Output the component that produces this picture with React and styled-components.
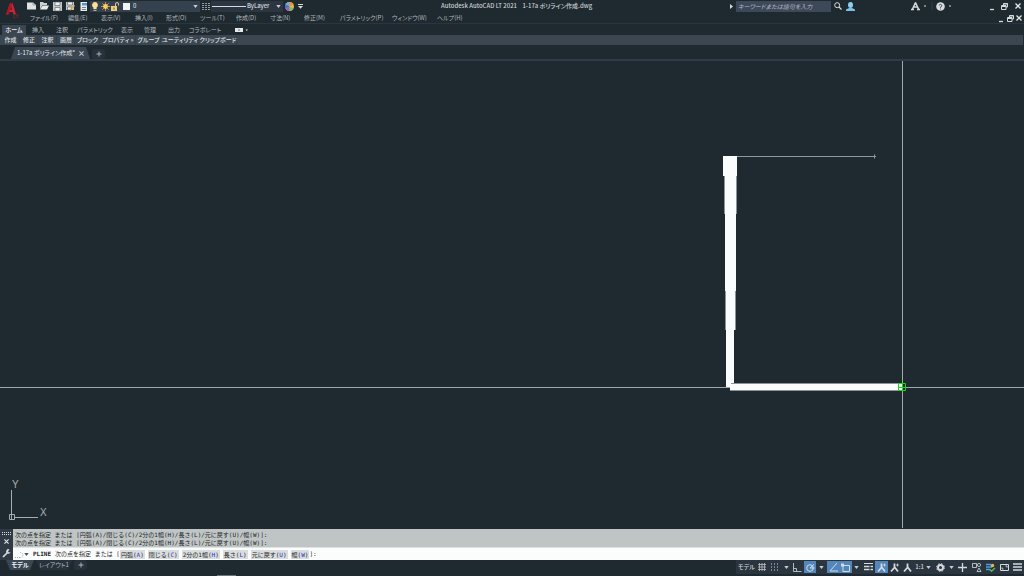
import React from "react";
import styled, { createGlobalStyle, css } from "styled-components";

const Global = createGlobalStyle`
  * { box-sizing: border-box; }
  html, body, #root { height: 100%; }
  body {
    margin: 0;
    overflow: hidden;
    background: #1f2a30;
    color: #b4bbc0;
    font: 6px/10px "Noto Sans CJK JP", "Noto Sans", sans-serif;
    font-feature-settings: "palt";
  }
  button, input, select { font: inherit; font-feature-settings: inherit; color: inherit; }
`;

const plain = css`
  border: 0;
  padding: 0;
  margin: 0;
  background: none;
  white-space: nowrap;
`;

const Shell = styled.div`
  display: flex;
  flex-direction: column;
  height: 100vh;
`;

const Icon = styled.svg`
  display: block;
  flex: none;
  overflow: visible;
`;

const TitleBar = styled.header`
  display: grid;
  grid-template-columns: 25px 1fr;
  height: 24px;
  border-bottom: 1px solid #2a3540;
`;

const Logo = styled.button`
  ${plain}
  display: flex;
  padding: 3px 0 0 6px;
`;

const TitleRows = styled.div`
  display: flex;
  flex-direction: column;
  min-width: 0;
`;

const TopRow = styled.div`
  display: flex;
  align-items: center;
  height: 12px;
`;

const QuickAccess = styled.div`
  display: flex;
  align-items: center;
  flex: none;
  width: 281px;
`;

const IconButton = styled.button`
  ${plain}
  display: flex;
  align-items: center;
  justify-content: center;
  flex: none;
  width: ${(p) => p.$w || 13}px;
  height: ${(p) => p.$h || 12}px;
  background: ${(p) => (p.$on ? "#5187bd" : "none")};
`;

const PickerBox = styled.div`
  display: flex;
  align-items: center;
  flex: none;
  gap: ${(p) => p.$gap || 0}px;
  width: ${(p) => p.$w}px;
  height: 11px;
  padding-right: 2px;
  background: ${(p) => p.$bg};
`;

const Picker = styled.select`
  ${plain}
  appearance: none;
  flex: 1;
  min-width: 0;
  height: 10px;
  color: #eceff1;
  line-height: 10px;
`;

const DocTitle = styled.h1`
  flex: 1;
  margin: 0;
  padding-left: 135px;
  font-size: 6px;
  line-height: 12px;
  font-weight: 500;
  color: #cbd0d3;
  white-space: pre;
`;

const Tools = styled.div`
  display: flex;
  align-items: center;
  flex: none;
`;

const Search = styled.input`
  ${plain}
  width: 95px;
  height: 11px;
  padding-left: 2px;
  background: #3d4858;
  &::placeholder { color: #b4bbc5; font-style: italic; opacity: 1; }
`;

const Gap = styled.span`
  flex: none;
  width: ${(p) => p.$w}px;
`;

const MenuRow = styled.nav`
  display: flex;
  align-items: center;
  height: 12px;
  padding-left: 5px;
`;

const MenuItem = styled.button`
  ${plain}
  flex: none;
  width: ${(p) => p.$w}px;
  line-height: 12px;
  text-align: left;
  color: #b0b7bb;
`;

const ChildControls = styled.div`
  display: flex;
  margin-left: auto;
  padding-right: 1px;
`;

const RibbonTabs = styled.nav`
  display: flex;
  align-items: flex-end;
  height: 11px;
  padding-left: 2px;
`;

const RibbonTab = styled.button`
  ${plain}
  flex: none;
  width: ${(p) => p.$w}px;
  height: 10px;
  line-height: 10px;
  color: ${(p) => (p.$on ? "#eef1f3" : "#b0b7bb")};
  font-weight: ${(p) => (p.$on ? 500 : 400)};
  background: ${(p) => (p.$on ? "#3b4653" : "none")};
`;

const PanelBar = styled.div`
  display: flex;
  height: 10px;
  margin-right: 1px;
  padding-left: 1px;
  background: #3b4650;
`;

const Panel = styled.button`
  ${plain}
  flex: none;
  width: ${(p) => p.$w}px;
  line-height: 10px;
  font-weight: 500;
  color: #dbe0e3;
  box-shadow: inset -1px 0 #343f4a;
`;

const FileTabs = styled.div`
  display: flex;
  align-items: flex-end;
  height: 16px;
  padding-left: 11px;
  gap: 2px;
  border-bottom: 2px solid #303b48;
`;

const FileTab = styled.div`
  display: flex;
  align-items: center;
  justify-content: space-between;
  width: 79px;
  height: 12px;
  padding: 0 6px;
  background: #3b4653;
  color: #e2e6e9;
  clip-path: polygon(4px 0, 75px 0, 100% 100%, 0 100%);
  white-space: nowrap;
`;

const AddTab = styled.button`
  ${plain}
  display: flex;
  align-items: center;
  justify-content: center;
  width: 13px;
  height: 10px;
  background: #28323c;
  border-radius: 3px;
`;

const Canvas = styled.main`
  flex: 1;
  min-height: 0;
  background: #1f2a30;
  svg { display: block; width: 100%; height: 100%; }
  text { font: 10px "Liberation Sans", sans-serif; fill: #aab0b3; }
`;

const Command = styled.section`
  display: grid;
  grid-template-columns: 13px 1fr;
  height: 31px;
  margin-top: 1px;
  color: #1d2325;
`;

const CommandSide = styled.div`
  display: flex;
  flex-direction: column;
  align-items: center;
  justify-content: space-between;
  padding: 3px 0 1px;
  background: #303a45;
`;

const CommandBody = styled.div`
  display: flex;
  flex-direction: column;
  min-width: 0;
  font-family: "DejaVu Sans Mono", "Noto Sans CJK JP", monospace;
  font-feature-settings: normal;
`;

const History = styled.div`
  height: 18px;
  padding: 2px 2px 0;
  background: #bfc5c4;
  line-height: 8px;
  white-space: pre;
`;

const Prompt = styled.label`
  display: flex;
  align-items: center;
  flex: 1;
  padding-left: 2px;
  border-top: 1px solid #dfe3e3;
  background: #fbfdfd;
  white-space: pre;
`;

const Keyword = styled.button`
  ${plain}
  height: 9px;
  line-height: 9px;
  padding: 0 1px;
  margin-right: 3px;
  background: #d9dddd;
  &:last-of-type { margin-right: 0; }
  b { color: #1f2ae0; font-weight: 400; }
`;

const PromptName = styled.b`
  padding: 0 4px;
`;

const PromptInput = styled.input`
  ${plain}
  flex: 1;
  min-width: 0;
  outline: 0;
`;

const StatusRow = styled.footer`
  display: flex;
  height: 16px;
`;

const LayoutTabs = styled.nav`
  display: flex;
  flex: none;
  width: 217px;
  gap: 2px;
  padding-left: 6px;
`;

const LayoutTab = styled.button`
  ${plain}
  width: ${(p) => p.$w}px;
  height: 10px;
  line-height: 10px;
  color: ${(p) => (p.$on ? "#f4f6f7" : "#b0b7bb")};
  background: ${(p) => (p.$on ? "#3b4653" : "#28323c")};
  font-weight: ${(p) => (p.$on ? 700 : 400)};
  clip-path: polygon(0 0, 100% 0, calc(100% - 4px) 100%, 4px 100%);
`;

const Grip = styled.div`
  align-self: flex-end;
  width: 19px;
  height: 1px;
  background: #6d767b;
`;

const StatusTools = styled.div`
  display: flex;
  align-items: center;
  height: 14px;
  margin-left: auto;
  background: #2b3540;
  color: #d5dadd;
`;

const StatusText = styled.button`
  ${plain}
  width: ${(p) => p.$w}px;
  text-align: right;
  font-weight: 500;
`;

const Caret = ({ c = "#c5cbd0" }) => (
  <Icon width="5" height="3" viewBox="0 0 5 3"><path d="M.3 0h4.400L2.500 3z" fill={c} /></Icon>
);

const G = ({ w = 10, h = 10, children }) => (
  <Icon width={w} height={h} viewBox={`0 0 ${w} ${h}`} fill="none" stroke="#d5dadd" strokeWidth="1">
    {children}
  </Icon>
);

const Plus = ({ c = "#a9b0b5" }) => <G w={6} h={6}><path d="M3 .5v5M.5 3h5" stroke={c} /></G>;
const Cross = ({ s = 6, c = "#e3e7e9" }) => (
  <Icon width={s} height={s} viewBox="0 0 6 6"><path d="M.5.5l5 5M5.500.5l-5 5" stroke={c} strokeWidth="1.300" /></Icon>
);
const Restore = () => <G w={7} h={7}><path d="M2.500 2V.500h4v3.500H5M.5 2.500h4.500v4H.5zM.5 3.500H5M2.500 1h4" /></G>;
const Minimise = () => <G w={6} h={7}><path d="M1 6.500h4" strokeWidth="1.300" /></G>;

const quick = [
  ["新規", <G w={9} h={8}><path d="M0 .5h6l3 2.500V7.500H0z" fill="#dfe3e3" stroke="none" /><path d="M6 .5v2.500h3" stroke="#7c868e" strokeWidth=".7" /></G>],
  ["開く", <G w={9} h={8}><path d="M0 0h3l1 1h3v2H2.500L0 7z" fill="#cbd0d1" stroke="none" /><path d="M2.500 3.500H9L7 7.500H0z" fill="#e8ebeb" stroke="none" /></G>],
  ["上書き保存", <G w={9} h={9}><path d="M0 0h9v9H0z" fill="#c2c8cb" stroke="none" /><path d="M2 0h5v3.500H2zM2 5.500h5V9H2z" fill="#eef0f0" stroke="#4d5961" strokeWidth=".6" /></G>],
  ["名前を付けて保存", <G w={9} h={9}><path d="M0 0h8v8H0z" fill="#c2c8cb" stroke="none" /><path d="M1.500 0h5v3h-5zM1.500 5h4v3h-4z" fill="#eef0f0" stroke="#4d5961" strokeWidth=".6" /><path d="M4 8l4.500-4.500" stroke="#e4a94a" strokeWidth="1.600" /></G>],
  ["印刷", <G w={8} h={9}><path d="M.5 0h6.500v9H.5z" fill="#e8ebec" stroke="none" /><path d="M2 1h5v2.500H2z" fill="#4f9ad0" stroke="none" /><path d="M2 5.500h4M2 7.500h4" stroke="#77828a" /></G>],
];

const layerTools = [
  ["表示", <G w={8} h={9}><path d="M4 0a3 3 0 0 1 1.600 5.500V7h-3.200V5.500A3 3 0 0 1 4 0z" fill="#fbdf94" stroke="none" /><path d="M2.500 8.300h3" stroke="#c5cacd" /></G>],
  ["フリーズ", <G w={9} h={9}><path d="M4.500 0v9M0 4.500h9M1.300 1.300l6.400 6.400M7.700 1.300L1.300 7.700" stroke="#e7a93c" strokeWidth=".8" /><circle cx="4.500" cy="4.500" r="2.400" fill="#f6cf68" stroke="none" /></G>],
  ["ロック", <G w={8} h={9}><path d="M4.500 4V2a1.500 1.500 0 0 1 3 0v1.500" stroke="#e8c77d" /><path d="M0 4h6v5H0z" fill="#efcf7f" stroke="none" /><path d="M3 5.500v2" stroke="#6b5a2c" /></G>],
];

const menus = [
  ["ファイル(F)", 38], ["編集(E)", 33], ["表示(V)", 34], ["挿入(I)", 31], ["形式(O)", 34], ["ツール(T)", 36],
  ["作成(D)", 34], ["寸法(N)", 34], ["修正(M)", 36], ["パラメトリック(P)", 52], ["ウィンドウ(W)", 45], ["ヘルプ(H)", 40],
];
const ribbon = [
  ["ホーム", 24], ["挿入", 24], ["注釈", 24], ["パラメトリック", 42], ["表示", 22], ["管理", 24], ["出力", 24], ["コラボレート", 38],
];
const panels = [
  ["作成", 19], ["修正", 18], ["注釈", 19], ["画層", 18], ["ブロック", 25], ["プロパティ »", 36], ["グループ", 25], ["ユーティリティ", 38], ["クリップボード", 38],
];
const keywords = [["円弧", "A"], ["閉じる", "C"], ["2分の1幅", "H"], ["長さ", "L"], ["元に戻す", "U"], ["幅", "W"]];
const historyLine = "次の点を指定 または [円弧(A)/閉じる(C)/2分の1幅(H)/長さ(L)/元に戻す(U)/幅(W)]:";

const Person = ({ star }) => (
  <G w={9} h={9}>
    <path d="M4.500.5v4L1 8.500M4.500 4L8 8.500" strokeWidth="1.800" />
    {star && <path d="M6 2h3M7.500.5v3" strokeWidth=".8" />}
  </G>
);

const status = [
  ["グリッド", 13, <G w={8} h={8}><path d="M1.500 0v8M4 0v8M6.500 0v8M0 1.500h8M0 4h8M0 6.500h8" stroke="#b9c0c5" strokeWidth=".8" /></G>],
  ["スナップ", 13, <G w={7} h={8}><path d="M0 1h7M0 4h7M0 7h7" strokeDasharray="1 2" /></G>],
  ["スナップ設定", 10, <Caret />],
  ["直交モード", 13, <G w={9} h={9}><path d="M.5 0v8.500h8M1 5.500h2.500v3" stroke="#b3babf" /></G>],
  ["極トラッキング", 12, <G w={9} h={9}><circle cx="4" cy="5" r="3.300" /><path d="M4 5h4.500M4 5L8 1.500" /></G>, true],
  ["極トラッキング設定", 11, <Caret />],
  ["オブジェクトスナップトラッキング", 12, <G w={9} h={9}><path d="M8 0L1 8h8" /></G>, true],
  ["オブジェクトスナップ", 13, <G w={9} h={9}><path d="M2 2.500h6.500v6H2z" /><path d="M0 .5h3v3H0z" fill="#d5dadd" stroke="none" /></G>, true],
  ["オブジェクトスナップ設定", 9, <Caret />],
  ["線の太さ", 14, <G w={9} h={8}><path d="M0 .5h9" /><path d="M0 3.500h5.500M6.500 3.500h2.500M0 6.500h5.500M6.500 6.500h2.500" strokeWidth="1.700" /></G>],
  ["注釈オブジェクト", 13, <Person star />, true],
  ["自動尺度", 13, <Person star />],
  ["注釈尺度", 12, <Person />],
];

export default function App() {
  return (
    <Shell>
      <Global />
      <TitleBar>
        <Logo aria-label="アプリケーション メニュー">
          <Icon width="13" height="17" viewBox="0 0 13 17">
            <path d="M0 11.500L4 0h2.500L10 11.500H7.500L6.700 9H3.600L2.300 11.500zM4.200 6.800h1.900L5.300 3.800z" fill="#cf2430" />
            <path d="M4 0h2.500L5.300 3.800 2.300 11.500H0z" fill="#a81722" />
            <path d="M8 11.500v3.500H9.500M10 12H12.500M11.300 12v3" stroke="#8e2029" fill="none" strokeWidth=".8" />
          </Icon>
        </Logo>
        <TitleRows>
          <TopRow>
            <QuickAccess>
              {quick.map(([n, g]) => <IconButton key={n} aria-label={n}>{g}</IconButton>)}
              <PickerBox $w={110} $bg="#364150">
                {layerTools.map(([n, g]) => <IconButton key={n} $w={10} $h={11} aria-label={n}>{g}</IconButton>)}
                <IconButton $w={13} $h={11} aria-label="画層の色"><G w={7} h={7}><path d="M0 0h7v7H0z" fill="#f3f5f5" stroke="none" /></G></IconButton>
                <Picker aria-label="画層"><option>0</option></Picker>
                <Caret />
              </PickerBox>
              <IconButton $w={11} aria-label="線種設定"><G w={8} h={7}><path d="M0 .5h8M0 2.500h8M0 4.500h8M0 6.500h8" stroke="#949ca1" strokeDasharray="2 1" /></G></IconButton>
              <PickerBox $w={72} $gap={1} $bg="#2c3643">
                <Gap $w={0} />
                <G w={34} h={1}><path d="M0 .5h34" /></G>
                <Picker aria-label="線種"><option>ByLayer</option></Picker>
                <Caret />
              </PickerBox>
              <IconButton aria-label="色">
                <G w={9} h={9}>
                  <circle cx="4.500" cy="4.500" r="4.500" fill="#e8b944" stroke="none" />
                  <path d="M4.500 4.500V0A4.500 4.500 0 0 0 .6 2.200z" fill="#5ab4e6" stroke="none" />
                  <path d="M4.500 4.500L.6 2.200A4.500 4.500 0 0 0 .6 6.800z" fill="#3f6fd0" stroke="none" />
                  <path d="M4.500 4.500L.6 6.800A4.500 4.500 0 0 0 4.500 9z" fill="#a557c4" stroke="none" />
                  <path d="M4.500 4.500V9A4.500 4.500 0 0 0 8.400 6.800z" fill="#63c07a" stroke="none" />
                  <path d="M4.500 4.500V0A4.500 4.500 0 0 1 8.400 2.200z" fill="#ee8a4a" stroke="none" />
                </G>
              </IconButton>
              <IconButton $w={8} aria-label="クイック アクセス設定"><G w={5} h={5}><path d="M0 .5h5" /><path d="M0 2h5L2.500 4.800z" fill="#d5dadd" stroke="none" /></G></IconButton>
            </QuickAccess>
            <DocTitle>Autodesk AutoCAD LT 2021    1-17a ポリライン作成.dwg</DocTitle>
            <Tools>
              <IconButton $w={10} aria-label="検索を折りたたむ"><G w={3} h={5}><path d="M0 0l3 2.500L0 5z" fill="#d5dadd" stroke="none" /></G></IconButton>
              <Search aria-label="検索" placeholder="キーワードまたは語句を入力" />
              <IconButton aria-label="検索実行"><G w={8} h={8}><circle cx="3.200" cy="3.200" r="2.500" /><path d="M5 5l2.500 2.500" strokeWidth="1.300" /></G></IconButton>
              <IconButton aria-label="サインイン"><G w={9} h={9}><ellipse cx="4.500" cy="3" rx="2.500" ry="3" fill="#8ccdf0" stroke="none" /><path d="M0 9V7.500L3 6h3L9 7.500V9z" fill="#79bfe6" stroke="none" /></G></IconButton>
              <Gap $w={52} />
              <IconButton aria-label="Autodesk App Store"><G w={9} h={8}><path d="M4.500.5L1.500 7M4.500.5L7.500 7M2.500 5h4M0 7.500h3M6 7.500h3" strokeWidth="1.500" /></G></IconButton>
              <IconButton $w={12} aria-label="アプリ設定"><G w={10} h={8}><path d="M1 4h2" /><path d="M9 0v8" stroke="#35404b" /></G></IconButton>
              <IconButton aria-label="ヘルプ"><G w={9} h={9}><circle cx="4.500" cy="4.500" r="4.300" fill="#d9dddf" stroke="none" /><path d="M3.200 3.500a1.300 1.300 0 1 1 1.300 1.500v.8M4.500 6.600v.9" stroke="#46515a" /></G></IconButton>
              <IconButton $w={6} aria-label="ヘルプ設定"><G w={2} h={2}><path d="M0 1h2" /></G></IconButton>
              <Gap $w={32} />
              <IconButton aria-label="最小化"><Minimise /></IconButton>
              <IconButton aria-label="元に戻す(縮小)"><Restore /></IconButton>
              <IconButton aria-label="閉じる"><Cross /></IconButton>
            </Tools>
          </TopRow>
          <MenuRow>
            {menus.map(([n, w]) => <MenuItem key={n} $w={w}>{n}</MenuItem>)}
            <ChildControls>
              <IconButton $w={9} aria-label="図面を最小化"><Minimise /></IconButton>
              <IconButton $w={10} aria-label="図面を元に戻す"><Restore /></IconButton>
              <IconButton $w={8} aria-label="図面を閉じる"><Cross /></IconButton>
            </ChildControls>
          </MenuRow>
        </TitleRows>
      </TitleBar>

      <RibbonTabs>
        {ribbon.map(([n, w], i) => <RibbonTab key={n} $w={w} $on={i === 0}>{n}</RibbonTab>)}
        <Gap $w={9} />
        <IconButton $w={16} $h={10} aria-label="リボン表示"><G w={13} h={4}><path d="M0 0h8v4H0z" fill="#e6e9ea" stroke="none" /><path d="M3 2h2" stroke="#66717a" /><path d="M10.500 1.500h2.500l-1.200 1.500z" fill="#d5dadd" stroke="none" /></G></IconButton>
      </RibbonTabs>
      <PanelBar>
        {panels.map(([n, w]) => <Panel key={n} $w={w}>{n}</Panel>)}
      </PanelBar>

      <FileTabs>
        <FileTab>1-17a ポリライン作成*<IconButton $w={6} aria-label="タブを閉じる"><Cross s={5} c="#b9c0c5" /></IconButton></FileTab>
        <AddTab aria-label="新しいタブ"><Plus /></AddTab>
      </FileTabs>

      <Canvas>
        <svg viewBox="0 0 1024 467" preserveAspectRatio="xMaxYMax slice" role="img" aria-label="作図領域">
          <path d="M0 326.500H1024M902.500 0V467" stroke="#a2a7a9" fill="none" />
          <path d="M737 95.500H876M874.500 93.500v4" stroke="#929899" fill="none" />
          <path d="M723 95h14v20h-.5v38H736v77h-.5v39H734v53h-3v4h-5v-57h-.5v-39H725v-77h-.5v-38H723z" fill="#fafdfd" />
          <path d="M730 322.500h173v7H730z" fill="#fafdfd" />
          <path d="M902 323h4v7h-4z" fill="#1f2a30" />
          <path d="M898.500 322.500h7v7h-7zM899 326.500h7M902.500 323v7" stroke="#14dc14" fill="none" />
          <path d="M11.500 429v29M9.500 453.500h5v5h-5zM14 456.500h24" stroke="#a6adb0" fill="none" />
          <text x="12" y="427">Y</text>
          <text x="40" y="455">X</text>
        </svg>
      </Canvas>

      <Command>
        <CommandSide>
          <G w={9} h={3}><path d="M0 .5h9M0 2.500h9" strokeDasharray="1 1" /></G>
          <IconButton $w={10} $h={8} aria-label="コマンドを閉じる"><Cross s={5} /></IconButton>
          <IconButton $w={10} $h={12} aria-label="コマンドのカスタマイズ"><G w={9} h={9}><path d="M1 8l4.500-4.500" strokeWidth="1.700" /><path d="M7.500.5a2.200 2.200 0 1 0 1 2.500L7 3.500 6 2.500z" fill="#d5dadd" stroke="none" /></G></IconButton>
        </CommandSide>
        <CommandBody>
          <History>{historyLine + "\n" + historyLine}</History>
          <Prompt>
            <G w={9} h={7}><path d="M0 6.500h5M5 1.500q3 0 3 2.500t-3 2.500" stroke="#9fb0bd" strokeDasharray="1 1" /></G>
            <Caret c="#4b5559" />
            <PromptName>PLINE</PromptName>
            <span>次の点を指定 または [</span>
            {keywords.map(([n, k]) => <Keyword key={k} type="button">{n}(<b>{k}</b>)</Keyword>)}
            <span>]:</span>
            <PromptInput aria-label="コマンド入力" />
          </Prompt>
        </CommandBody>
      </Command>

      <StatusRow>
        <LayoutTabs>
          <LayoutTab $w={28} $on>モデル</LayoutTab>
          <LayoutTab $w={36}>レイアウト1</LayoutTab>
          <AddTab aria-label="新しいレイアウト"><Plus /></AddTab>
        </LayoutTabs>
        <Grip />
        <StatusTools>
          <StatusText $w={19}>モデル</StatusText>
          {status.map(([n, w, g, on]) => <IconButton key={n} $w={w} $h={12} $on={on} aria-label={n}>{g}</IconButton>)}
          <StatusText $w={11}>1:1</StatusText>
          <IconButton $w={9} aria-label="尺度一覧"><Caret /></IconButton>
          <IconButton $w={14} aria-label="ワークスペース"><G w={9} h={9}><circle cx="4.500" cy="4.500" r="2.500" strokeWidth="2" /><circle cx="4.500" cy="4.500" r="3.900" strokeWidth="1" strokeDasharray="1.600 1.460" /></G></IconButton>
          <IconButton $w={8} aria-label="ワークスペース一覧"><Caret /></IconButton>
          <IconButton $w={14} aria-label="注釈モニター"><G w={9} h={9}><path d="M4.500 0v9M0 4.500h9" strokeWidth="1.300" /></G></IconButton>
          <IconButton $w={14} aria-label="選択の表示"><G w={9} h={9}><path d="M.5.5h4v4h-4zM5 8.500l2-3.500 2 3.500z" strokeWidth=".8" /><circle cx="7" cy="2" r="1.600" strokeWidth=".8" /></G></IconButton>
          <IconButton $w={14} aria-label="グラフィックス"><G w={9} h={9}><path d="M0 1.500h5M0 4h6M0 6.500h4" stroke="#4f9fe0" strokeWidth="1.700" /><circle cx="6.500" cy="2.500" r="1.700" fill="#e7b84c" stroke="none" /><path d="M4 6.500l1.500 1.700L9 5" stroke="#57b957" strokeWidth="1.500" /></G></IconButton>
          <IconButton $w={14} aria-label="フルスクリーン"><G w={9} h={7}><path d="M.5.500h8v6h-8zM2 4.800V3.500M2 5h1.500M7 2H5.500M7 2v1.500" /></G></IconButton>
          <IconButton $w={13} aria-label="カスタマイズ"><G w={9} h={8}><path d="M0 1h9M0 4h9M0 7h9" strokeWidth="1.300" /></G></IconButton>
        </StatusTools>
      </StatusRow>
    </Shell>
  );
}
